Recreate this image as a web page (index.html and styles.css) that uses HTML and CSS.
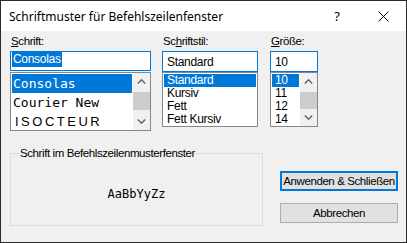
FILE: index.html
```html
<!DOCTYPE html>
<html lang="de">
<head>
    <meta charset="UTF-8">
    <title>Schriftmuster für Befehlszeilenfenster</title>
    <link rel="stylesheet" href="styles.css">
</head>
<body>
    <div class="window">
        <!-- Title bar -->
        <div class="titlebar">
            <span class="title">Schriftmuster für Befehlszeilenfenster</span>
            <span class="caption-btn help">?</span>
            <span class="caption-btn close">
                <svg width="11" height="11" viewBox="0 0 11 11"><path d="M0.5 0.5L10.5 10.5M10.5 0.5L0.5 10.5" stroke="#000" stroke-width="1" fill="none"/></svg>
            </span>
        </div>

        <div class="client">
            <div class="pickers">
                <!-- Font -->
                <div class="picker picker-font">
                    <label class="label"><u>S</u>chrift:</label>
                    <div class="field field-font"><span class="sel-text">Consolas</span></div>
                    <div class="list list-font">
                        <ul class="items mono">
                            <li class="selected">Consolas</li>
                            <li>Courier New</li>
                            <li class="wide">ISOCTEUR</li>
                        </ul>
                        <div class="scrollbar">
                            <div class="arrow"><svg width="9" height="5" viewBox="0 0 9 5"><path d="M0.8 4.4L4.5 0.8L8.2 4.4" stroke="#606060" stroke-width="1.4" fill="none"/></svg></div>
                            <div class="track"><div class="thumb thumb-font"></div></div>
                            <div class="arrow"><svg width="9" height="5" viewBox="0 0 9 5"><path d="M0.8 0.6L4.5 4.2L8.2 0.6" stroke="#606060" stroke-width="1.4" fill="none"/></svg></div>
                        </div>
                    </div>
                </div>

                <!-- Style -->
                <div class="picker picker-style">
                    <label class="label">Sc<u>h</u>riftstil:</label>
                    <div class="field">Standard</div>
                    <div class="list list-short">
                        <ul class="items">
                            <li class="selected">Standard</li>
                            <li>Kursiv</li>
                            <li>Fett</li>
                            <li>Fett Kursiv</li>
                        </ul>
                    </div>
                </div>

                <!-- Size -->
                <div class="picker picker-size">
                    <label class="label"><u>G</u>röße:</label>
                    <div class="field">10</div>
                    <div class="list list-short">
                        <ul class="items">
                            <li class="selected">10</li>
                            <li>11</li>
                            <li>12</li>
                            <li>14</li>
                        </ul>
                        <div class="scrollbar">
                            <div class="arrow"><svg width="9" height="5" viewBox="0 0 9 5"><path d="M0.8 4.4L4.5 0.8L8.2 4.4" stroke="#606060" stroke-width="1.4" fill="none"/></svg></div>
                            <div class="track"><div class="thumb thumb-size"></div></div>
                            <div class="arrow"><svg width="9" height="5" viewBox="0 0 9 5"><path d="M0.8 0.6L4.5 4.2L8.2 0.6" stroke="#606060" stroke-width="1.4" fill="none"/></svg></div>
                        </div>
                    </div>
                </div>
            </div>

            <div class="bottom">
                <fieldset class="sample">
                    <legend>Schrift im Befehlszeilenmusterfenster</legend>
                    <div class="preview">AaBbYyZz</div>
                </fieldset>

                <div class="actions">
                    <button class="default">Anwenden &amp; Schließen</button>
                    <button>Abbrechen</button>
                </div>
            </div>
        </div>
    </div>
</body>
</html>
```

FILE: styles.css
```css
body {
    margin: 0;
}

.window {
    width: 407px;
    height: 243px;
    box-sizing: border-box;
    border: 1px solid #2b2b2b;
    display: flex;
    flex-direction: column;
    background: #f0f0f0;
    font-family: "Liberation Sans", Arial, sans-serif;
    font-size: 11px;
    color: #000;
}

/* title bar */
.titlebar {
    height: 30px;
    flex-shrink: 0;
    display: flex;
    align-items: center;
    background: #fff;
}
.title {
    flex: 1;
    padding-left: 8px;
    font-family: "Noto Sans", sans-serif;
    font-size: 12px;
}
.caption-btn {
    width: 46px;
    height: 30px;
    display: flex;
    align-items: center;
    justify-content: center;
}
.help {
    font-family: "Noto Sans", sans-serif;
    font-size: 13px;
}

/* dialog body */
.client {
    flex: 1;
    padding: 3px 8px 0 9px;
}
.pickers {
    display: flex;
}
.picker-font {
    width: 141px;
    margin-right: 11px;
}
.picker-style {
    width: 96px;
    margin-right: 12px;
}
.picker-size {
    width: 48px;
}

.label {
    display: block;
    height: 15px;
    line-height: 15px;
    margin-bottom: 2px;
    padding-left: 1px;
    font-size: 11.5px;
    letter-spacing: -0.4px;
}

.field {
    height: 21px;
    box-sizing: border-box;
    border: 1px solid #0078d7;
    background: #fff;
    padding-left: 4px;
    display: flex;
    align-items: center;
    font-size: 12px;
    letter-spacing: -0.3px;
}
.field-font {
    height: 20px;
    margin-bottom: 1px;
    padding-left: 1px;
    align-items: flex-start;
}
.sel-text {
    background: #0078d7;
    color: #fff;
    line-height: 15px;
    padding: 0 1px;
}

.list {
    display: flex;
    box-sizing: border-box;
    border: 1px solid #828790;
    background: #fff;
}
.list-font {
    height: 59px;
}
.list-short {
    height: 55px;
}

.items {
    flex: 1;
    margin: 0;
    padding: 1px 1px 0;
    list-style: none;
    overflow: hidden;
}
.items li {
    height: 13px;
    line-height: 13px;
    padding-left: 3px;
    font-size: 12px;
    letter-spacing: -0.3px;
    white-space: nowrap;
}
.items .selected {
    background: #0078d7;
    color: #fff;
}
.mono li {
    height: 19px;
    line-height: 19px;
    padding-left: 1px;
    font-family: "DejaVu Sans Mono", monospace;
    font-size: 13px;
    letter-spacing: 0;
}
.mono .wide {
    letter-spacing: 2.5px;
    font-family: "Liberation Sans", sans-serif;
    padding-left: 3px;
}

.scrollbar {
    width: 17px;
    display: flex;
    flex-direction: column;
    background: #f0f0f0;
}
.arrow {
    height: 17px;
    display: flex;
    align-items: center;
    justify-content: center;
}
.track {
    flex: 1;
}
.thumb {
    background: #cdcdcd;
}
.thumb-font {
    margin-top: 2px;
    height: 18px;
}
.thumb-size {
    margin-top: 2px;
    height: 17px;
}

/* sample box and buttons */
.bottom {
    display: flex;
    margin-top: 16px;
}
.sample {
    width: 253px;
    height: 79px;
    box-sizing: border-box;
    margin: 0;
    padding: 0;
    border: 1px solid #dcdcdc;
}
.sample legend {
    margin-left: 8px;
    padding: 0 1px;
    line-height: 13px;
    font-size: 11.5px;
    letter-spacing: -0.4px;
}
.preview {
    text-align: center;
    padding-top: 27px;
    line-height: 15px;
    font-family: "DejaVu Sans Mono", monospace;
    font-size: 12px;
}

.actions {
    display: flex;
    flex-direction: column;
    gap: 12px;
    margin-left: 17px;
    margin-top: 24px;
}
.actions button {
    width: 118px;
    height: 20px;
    box-sizing: border-box;
    padding: 0;
    background: #e1e1e1;
    border: 1px solid #adadad;
    font-family: "Liberation Sans", Arial, sans-serif;
    font-size: 11.5px;
    letter-spacing: -0.4px;
    white-space: nowrap;
    color: #000;
}
.actions .default {
    border: 2px solid #0078d7;
}
```
